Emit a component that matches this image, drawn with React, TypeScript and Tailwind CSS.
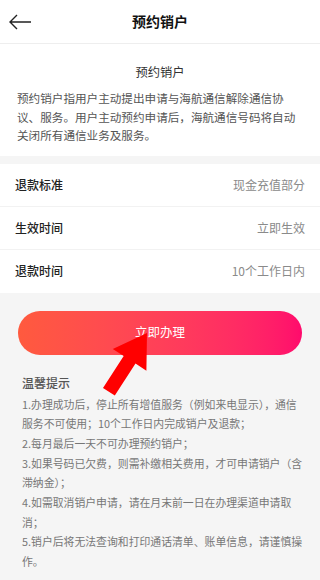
import React from "react";

const ROWS = [
  ["退款标准", "现金充值部分"],
  ["生效时间", "立即生效"],
  ["退款时间", "10个工作日内"],
];

const TIPS = [
  "1.办理成功后，停止所有增值服务（例如来电显示），通信服务不可使用；10个工作日内完成销户及退款；",
  "2.每月最后一天不可办理预约销户；",
  "3.如果号码已欠费，则需补缴相关费用，才可申请销户（含滞纳金）；",
  "4.如需取消销户申请，请在月末前一日在办理渠道申请取消；",
  "5.销户后将无法查询和打印通话清单、账单信息，请谨慎操作。",
];

export default function App() {
  return (
    <div
      className="relative min-h-screen bg-[#f5f5f5] overflow-hidden"
      style={{ fontFamily: '"Noto Sans CJK SC", "Noto Sans", sans-serif' }}
    >
      {/* header */}
      <div className="relative h-[44px] bg-white border-b border-[#eeeeee] flex items-center justify-center">
        <svg className="absolute left-[8px] top-[14px]" width="24" height="16" viewBox="0 0 24 16" fill="none">
          <path d="M23 8H2M9 1L2 8l7 7" stroke="#222" strokeWidth="1.4" />
        </svg>
        <span className="text-[14px] font-bold text-[#111]">预约销户</span>
      </div>

      {/* intro */}
      <div className="bg-white px-[17px] pt-[19px] pb-[11px]">
        <div className="text-center text-[12.3px] leading-[18px] text-[#333]">预约销户</div>
        <p className="mt-[8px] text-[11.6px] leading-[18.5px] text-[#555]">
          预约销户指用户主动提出申请与海航通信解除通信协议、服务。用户主动预约申请后，海航通信号码将自动关闭所有通信业务及服务。
        </p>
      </div>

      {/* rows */}
      <div className="mt-[8px] bg-white">
        {ROWS.map(([k, v], i) => (
          <div
            key={k}
            className={
              "h-[43px] flex items-center justify-between pl-[15px] pr-[15px] " +
              (i < ROWS.length - 1 ? "border-b border-[#f2f2f2]" : "")
            }
          >
            <span className="text-[12px] font-medium text-[#222]">{k}</span>
            <span className="text-[12px] text-[#8a8a8a]">{v}</span>
          </div>
        ))}
      </div>

      {/* button */}
      <div className="mt-[18px] mx-[18px] h-[44px] rounded-full bg-gradient-to-r from-[#ff5a3e] to-[#ff0a6c] flex items-center justify-center">
        <span className="text-[12.5px] text-white">立即办理</span>
      </div>

      {/* tips */}
      <div className="pl-[22px] pr-[17px] mt-[19px]">
        <div className="text-[12px] leading-[18px] font-medium text-[#555]">温馨提示</div>
        <div className="mt-[3px] text-[10.85px] leading-[19.7px] text-[#777]">
          {TIPS.map((t) => (
            <div key={t}>{t}</div>
          ))}
        </div>
      </div>

      {/* red arrow overlay */}
      <svg className="absolute left-0 top-0 pointer-events-none" width="320" height="580" viewBox="0 0 320 580">
        <polygon
          points="147,333 146.4,370.7 135.5,363.6 114.8,395.5 103,387.9 123.7,356 112.8,348.9"
          fill="#ff0000"
        />
      </svg>
    </div>
  );
}
